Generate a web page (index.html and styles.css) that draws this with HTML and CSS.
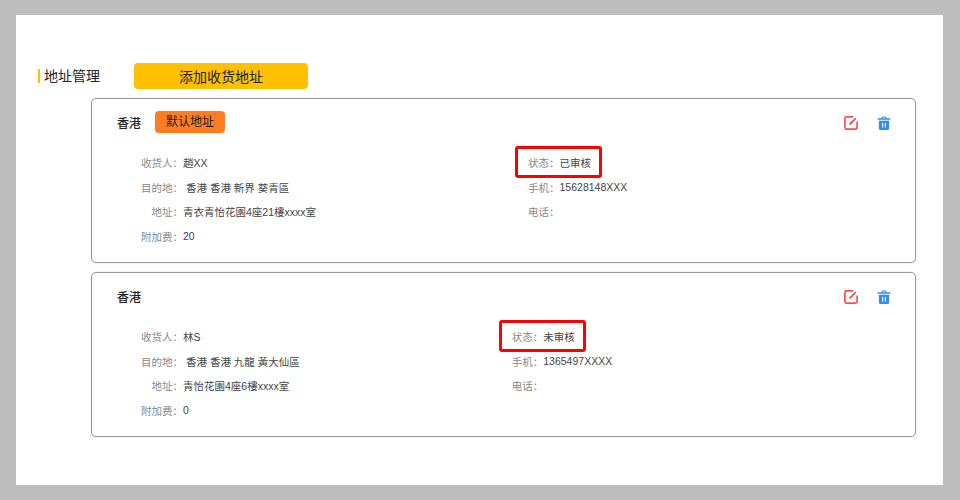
FILE: index.html
```html
<!DOCTYPE html>
<html lang="zh-CN">
<head>
<meta charset="utf-8">
<title>地址管理</title>
<link rel="stylesheet" href="styles.css">
</head>
<body>
<main class="panel">
  <header class="toolbar">
    <h1 class="page-title">地址管理</h1>
    <button class="add-btn" type="button">添加收货地址</button>
  </header>
  <section class="cards">
    <article class="card">
      <div class="card-head">
        <strong class="region">香港</strong>
        <span class="tag">默认地址</span>
        <div class="actions">
          <svg class="icon" viewBox="0 0 14 14" width="14" height="14" aria-label="编辑"><path d="M9 .9H2.4A1.5 1.5 0 0 0 .9 2.4v9.2a1.5 1.5 0 0 0 1.5 1.5h9.2a1.5 1.5 0 0 0 1.5-1.5V5.5" fill="none" stroke="#ff4d4f" stroke-width="1.7"/><path d="M5.6 8.4 11.8 2.2" fill="none" stroke="#f4333f" stroke-width="1.5"/></svg>
          <svg class="icon" viewBox="0 0 14 14" width="14" height="14" aria-label="删除"><path d="M4.6 2.2V1.4C4.6.8 5 .5 5.6.5h2.8c.6 0 1 .3 1 .9v.8h3.9v1.6H.7V2.2zm1.2 0h2.4v-.6H5.8z" fill="#2f8cff" fill-rule="evenodd"/><path d="M1.9 4.8h10.2v7.9c0 .7-.5 1.2-1.2 1.2H3.1c-.7 0-1.2-.5-1.2-1.2zM5 7v4.4h1.2V7zm2.8 0v4.4H9V7z" fill="#2f8cff" fill-rule="evenodd"/></svg>
        </div>
      </div>
      <div class="details">
        <dl class="col">
          <dt>收货人：</dt><dd>趙XX</dd>
          <dt>目的地：</dt><dd class="dest">香港 香港 新界 葵青區</dd>
          <dt>地址：</dt><dd>青衣青怡花園4座21樓xxxx室</dd>
          <dt>附加费：</dt><dd>20</dd>
        </dl>
        <dl class="col">
          <dt class="marked">状态：<span class="highlight"></span></dt><dd>已审核</dd>
          <dt>手机：</dt><dd>15628148XXX</dd>
          <dt>电话：</dt><dd></dd>
        </dl>
      </div>
    </article>
    <article class="card">
      <div class="card-head">
        <strong class="region">香港</strong>
        <div class="actions">
          <svg class="icon" viewBox="0 0 14 14" width="14" height="14" aria-label="编辑"><path d="M9 .9H2.4A1.5 1.5 0 0 0 .9 2.4v9.2a1.5 1.5 0 0 0 1.5 1.5h9.2a1.5 1.5 0 0 0 1.5-1.5V5.5" fill="none" stroke="#ff4d4f" stroke-width="1.7"/><path d="M5.6 8.4 11.8 2.2" fill="none" stroke="#f4333f" stroke-width="1.5"/></svg>
          <svg class="icon" viewBox="0 0 14 14" width="14" height="14" aria-label="删除"><path d="M4.6 2.2V1.4C4.6.8 5 .5 5.6.5h2.8c.6 0 1 .3 1 .9v.8h3.9v1.6H.7V2.2zm1.2 0h2.4v-.6H5.8z" fill="#2f8cff" fill-rule="evenodd"/><path d="M1.9 4.8h10.2v7.9c0 .7-.5 1.2-1.2 1.2H3.1c-.7 0-1.2-.5-1.2-1.2zM5 7v4.4h1.2V7zm2.8 0v4.4H9V7z" fill="#2f8cff" fill-rule="evenodd"/></svg>
        </div>
      </div>
      <div class="details">
        <dl class="col">
          <dt>收货人：</dt><dd>林S</dd>
          <dt>目的地：</dt><dd class="dest">香港 香港 九龍 黃大仙區</dd>
          <dt>地址：</dt><dd>青怡花園4座6樓xxxx室</dd>
          <dt>附加费：</dt><dd>0</dd>
        </dl>
        <dl class="col">
          <dt class="marked">状态：<span class="highlight"></span></dt><dd>未审核</dd>
          <dt>手机：</dt><dd>1365497XXXX</dd>
          <dt>电话：</dt><dd></dd>
        </dl>
      </div>
    </article>
  </section>
</main>
</body>
</html>
```

FILE: styles.css
```css
* {
  box-sizing: border-box;
}

html,
body {
  margin: 0;
  height: 100%;
}

body {
  background: #bdbdbd;
  padding: 15px 17px 15px 16px;
  font-family: "Liberation Sans", "Noto Sans CJK SC", sans-serif;
  color: #333;
}

.panel {
  background: #fff;
  height: 470px;
  padding: 48px 27px 0 22px;
}

.toolbar {
  display: flex;
  align-items: center;
  height: 26px;
}

.page-title {
  margin: 0;
  padding-left: 4px;
  border-left: 2px solid #ffc000;
  font-size: 14px;
  font-weight: 400;
  line-height: 14px;
  color: #222;
}

.add-btn {
  margin-left: 34px;
  width: 174px;
  height: 26px;
  padding: 0;
  border: 0;
  border-radius: 4px;
  background: #ffc000;
  font: inherit;
  font-size: 14px;
  color: #222;
}

.cards {
  display: flex;
  flex-direction: column;
  gap: 9px;
  margin: 9px 0 0 53px;
}

.card {
  height: 165px;
  padding: 12px 24px 0 25px;
  border: 1px solid #999;
  border-radius: 5px;
  box-shadow: 0 0 1px rgba(0, 0, 0, 0.35);
}

.card-head {
  display: flex;
  align-items: center;
  min-height: 22px;
}

.region {
  font-size: 12px;
  font-weight: 500;
  color: #222;
}

.tag {
  margin-left: 14px;
  width: 70px;
  height: 22px;
  border-radius: 4px;
  background: #ff7d20;
  font-size: 12px;
  line-height: 22px;
  text-align: center;
  color: #222;
}

.actions {
  display: flex;
  gap: 19px;
  margin-left: auto;
  padding-top: 2px;
}

.details {
  display: flex;
  gap: 212px;
  margin-top: 17.5px;
  padding-left: 24px;
}

.col {
  display: grid;
  grid-template-columns: max-content max-content;
  grid-auto-rows: 24.5px;
  align-items: center;
  align-content: start;
  margin: 0;
  font-size: 10.5px;
}

.col dt {
  color: #888;
  text-align: right;
}

.col dd {
  margin: 0;
  color: #444;
}

.col .dest {
  padding-left: 3px;
}

.marked {
  position: relative;
}

.highlight {
  position: absolute;
  left: -13px;
  top: -9px;
  width: 87px;
  height: 32px;
  border: 3px solid #f00;
  border-radius: 3px;
}
```
